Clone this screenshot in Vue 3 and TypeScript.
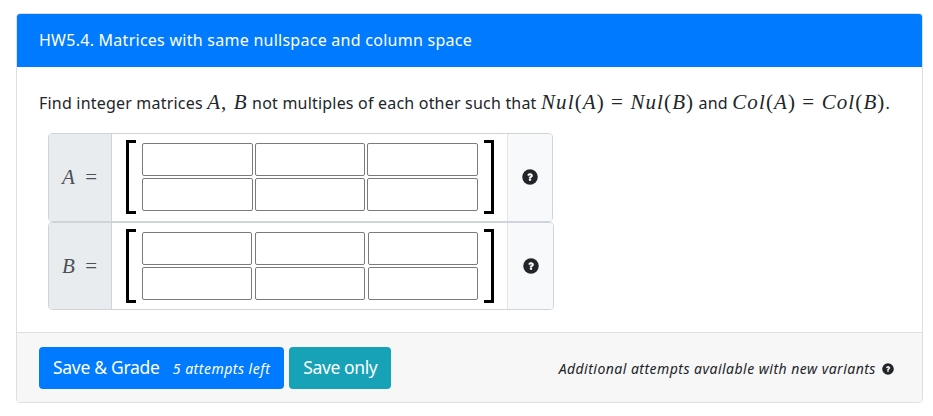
<script setup lang="ts">
const matrices = [
  { name: "A", wide: false },
  { name: "B", wide: true },
];
const cells = [1, 2, 3, 4, 5, 6];
const questionPath =
  "M262.655 90c-54.497 0-89.255 22.957-116.549 63.758-3.536 5.286-2.353 12.415 2.715 16.258l34.699 26.31c5.205 3.947 12.621 3.008 16.665-2.122 17.864-22.658 30.113-35.797 57.303-35.797 20.429 0 45.698 13.148 45.698 32.958 0 14.976-12.363 22.667-32.534 33.976C247.128 238.528 216 254.941 216 296v4c0 6.627 5.373 12 12 12h56c6.627 0 12-5.373 12-12v-1.333c0-28.462 83.186-29.647 83.186-106.667 0-58.002-60.165-102-116.531-102zM256 338c-25.365 0-46 20.635-46 46 0 25.364 20.635 46 46 46s46-20.636 46-46c0-25.365-20.635-46-46-46z";
</script>

<template>
  <div class="page">
    <section class="card">
      <header class="card-header">HW5.4. Matrices with same nullspace and column space</header>
      <div class="card-body">
        <p class="prompt">
          Find integer matrices <span class="math"><i>A</i>, <i>B</i></span> not multiples of each other such that
          <span class="math"><i>Nul</i>(<i>A</i>) = <i>Nul</i>(<i>B</i>)</span> and
          <span class="math"><i>Col</i>(<i>A</i>) = <i>Col</i>(<i>B</i>)</span>.
        </p>
        <div class="groups">
          <div v-for="m in matrices" :key="m.name" class="input-group" :class="{ 'is-wide': m.wide }">
            <div class="prepend"><span class="math"><i>{{ m.name }}</i> =</span></div>
            <div class="matrix-wrap">
              <span class="bracket bracket-left"></span>
              <div class="matrix">
                <input v-for="c in cells" :key="c" type="text" class="cell" />
              </div>
              <span class="bracket bracket-right"></span>
            </div>
            <div class="append">
              <svg class="help" viewBox="0 0 512 512" aria-hidden="true">
                <circle cx="256" cy="256" r="248" />
                <path class="help-mark" :d="questionPath" />
              </svg>
            </div>
          </div>
        </div>
      </div>
      <footer class="card-footer">
        <button type="button" class="btn btn-primary">
          Save &amp; Grade <small class="attempts">5 attempts left</small>
        </button>
        <button type="button" class="btn btn-info">Save only</button>
        <span class="note">
          Additional attempts available with new variants
          <svg class="help help-small" viewBox="0 0 512 512" aria-hidden="true">
            <circle cx="256" cy="256" r="248" />
            <path class="help-mark" :d="questionPath" />
          </svg>
        </span>
      </footer>
    </section>
  </div>
</template>

<style>
html,
body {
  margin: 0;
  background: #fff;
}
</style>

<style scoped>
.page {
  width: 933px;
  height: 416px;
  padding: 13px 10px 13px 16px;
  box-sizing: border-box;
  font-family: "Noto Sans", "Open Sans", sans-serif;
  font-size: 16px;
  color: #212529;
  overflow: hidden;
}

.card {
  display: flex;
  flex-direction: column;
  height: 390px;
  box-sizing: border-box;
  border: 1px solid #dfdfdf;
  border-radius: 4px;
  overflow: hidden;
}

.card-header {
  height: 53px;
  box-sizing: border-box;
  flex: 0 0 auto;
  display: flex;
  align-items: center;
  padding: 0 0 2px 22px;
  background: #007bff;
  color: #fff;
  font-size: 16px;
  letter-spacing: 0.26px;
}

.card-body {
  flex: 1 1 auto;
  padding: 0 22px;
}

.prompt {
  margin: 21px 0 0;
  height: 45px;
  line-height: 28px;
  font-size: 16px;
  letter-spacing: 0.2px;
  white-space: nowrap;
}

.math {
  font-family: "Liberation Serif", serif;
  font-size: 21px;
  letter-spacing: 1.1px;
}

.groups {
  display: flex;
  flex-direction: column;
  margin-left: 9px;
}

.input-group {
  display: flex;
  width: 505px;
  height: 89px;
  box-sizing: border-box;
  border: 1px solid #ced4da;
  border-radius: 4px;
  overflow: hidden;
}

.input-group.is-wide {
  width: 506px;
  height: 88px;
}

.prepend {
  width: 62px;
  flex: 0 0 auto;
  display: flex;
  align-items: center;
  justify-content: center;
  background: #e9ecef;
  border-right: 1px solid #ced4da;
  color: #495057;
  word-spacing: 3px;
}

.matrix-wrap {
  flex: 1 1 auto;
  display: flex;
  align-items: center;
  gap: 6px;
  padding: 0 0 1px 14px;
}

.is-wide .matrix-wrap {
  padding-bottom: 0;
}

.matrix {
  display: grid;
  grid-template-columns: repeat(3, 110.67px);
  grid-auto-rows: 33px;
  gap: 2px;
}

.is-wide .matrix {
  grid-template-columns: repeat(3, 110px);
  column-gap: 3px;
}

.cell {
  box-sizing: border-box;
  width: 100%;
  height: 100%;
  margin: 0;
  padding: 0;
  background: #fff;
  border: 1px solid #7b7b7b;
  border-radius: 2px;
}

.bracket {
  width: 10px;
  height: 74px;
  box-sizing: border-box;
  border-top: 3px solid #000;
  border-bottom: 3px solid #000;
  flex: 0 0 auto;
}

.bracket-left {
  border-left: 3px solid #000;
}

.bracket-right {
  border-right: 3px solid #000;
}

.append {
  width: 45px;
  box-sizing: border-box;
  flex: 0 0 auto;
  display: flex;
  align-items: center;
  justify-content: center;
  padding-bottom: 1px;
  background: #f8f9fa;
  border-left: 1px solid #e4e7ea;
}

.is-wide .append {
  width: 46px;
  padding-bottom: 0;
}

.help {
  width: 16px;
  height: 16px;
  fill: #212529;
}

.help-mark {
  fill: #fff;
  stroke: #fff;
  stroke-width: 24px;
  transform: translate(256px, 256px) scale(0.68) translate(-256px, -256px);
}

.help-small {
  width: 12px;
  height: 12px;
  margin-left: 2px;
  vertical-align: -1px;
}

.card-footer {
  height: 70px;
  box-sizing: border-box;
  flex: 0 0 auto;
  display: flex;
  align-items: center;
  gap: 5px;
  padding: 0 28px 0 22px;
  background: #f7f7f7;
  border-top: 1px solid #dfdfdf;
}

.btn {
  height: 42px;
  margin: 0;
  border: 0;
  border-radius: 4px;
  color: #fff;
  font-family: inherit;
  font-size: 17.5px;
  letter-spacing: -0.3px;
  padding: 0 14px 1px;
}

.btn-primary {
  background: #007bff;
}

.btn-info {
  background: #17a2b8;
  letter-spacing: -0.4px;
}

.attempts {
  font-size: 14px;
  font-style: italic;
  font-weight: 400;
  margin-left: 9px;
  letter-spacing: 0.5px;
}

.note {
  margin-left: auto;
  padding-top: 1px;
  font-size: 14px;
  font-style: italic;
  letter-spacing: 0.47px;
  white-space: nowrap;
}
</style>
